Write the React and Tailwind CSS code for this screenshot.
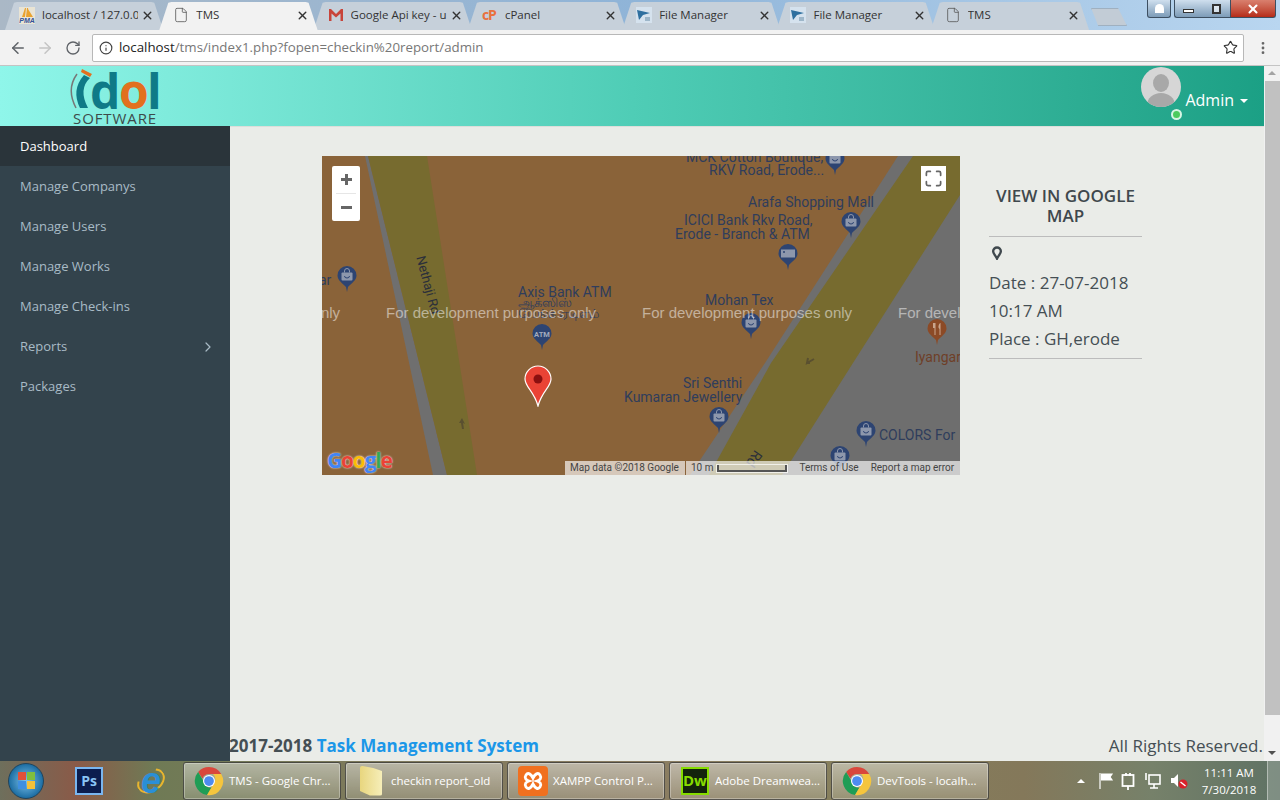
import React from "react";
import { ArrowLeft, ArrowRight, ChevronRight, File, Info, Maximize, MoreVertical, RotateCw, Star, X } from "lucide-react";

const tabs = [
  { title: "localhost / 127.0.0", icon: "pma" },
  { title: "TMS", icon: "doc", active: true },
  { title: "Google Api key - u", icon: "gmail" },
  { title: "cPanel", icon: "cpanel" },
  { title: "File Manager", icon: "fm" },
  { title: "File Manager", icon: "fm" },
  { title: "TMS", icon: "doc" },
];

const menu = ["Dashboard", "Manage Companys", "Manage Users", "Manage Works", "Manage Check-ins", "Reports", "Packages"];

const pins = [
  { cls: "left-[15px] top-[110px]", kind: "bag" },
  { cls: "left-[210px] top-[168px]", kind: "atm" },
  { cls: "left-[503px] top-[-7px]", kind: "bag" },
  { cls: "left-[519px] top-[56px]", kind: "bag" },
  { cls: "left-[456px] top-[88px]", kind: "bank" },
  { cls: "left-[419px] top-[157px]", kind: "bag" },
  { cls: "left-[387px] top-[251px]", kind: "bag" },
  { cls: "left-[534px] top-[265px]", kind: "bag" },
  { cls: "left-[508px] top-[290px]", kind: "bag" },
  { cls: "left-[605px] top-[163px]", kind: "food" },
];

const labels = [
  { text: "MCK Cotton Boutique,", cls: "left-[364px] top-[-6px]" },
  { text: "RKV Road, Erode...", cls: "left-[387px] top-[7px]" },
  { text: "Arafa Shopping Mall", cls: "left-[426px] top-[39px]" },
  { text: "ICICI Bank Rkv Road,", cls: "left-[362px] top-[57px]" },
  { text: "Erode - Branch & ATM", cls: "left-[353px] top-[71px]" },
  { text: "Axis Bank ATM", cls: "left-[196px] top-[129px]" },
  { text: "Mohan Tex", cls: "left-[383px] top-[137px]" },
  { text: "Sri Senthi", cls: "left-[361px] top-[220px]" },
  { text: "Kumaran Jewellery", cls: "left-[302px] top-[234px]" },
  { text: "COLORS For", cls: "left-[557px] top-[272px]" },
  { text: "ar", cls: "left-[-3px] top-[117px]" },
];

const watermarks = ["left-[-192px]", "left-[64px]", "left-[320px]", "left-[576px]"];

function ChromeIcon({ size = 30 }) {
  return (
    <svg width={size} height={size} viewBox="0 0 32 32" className="shrink-0">
      <path d="M16 1a15 15 0 0 1 13 7.5H16a7.5 7.5 0 0 0-7 4.8L4.4 6.4A15 15 0 0 1 16 1z" fill="#d9473c" />
      <path d="M4.4 6.4 11 17.5a7.5 7.5 0 0 0 7.6 5.6l-4.7 7.8A15 15 0 0 1 4.4 6.4z" fill="#1f9d55" />
      <path d="M29 8.5a15 15 0 0 1-15.1 22.4l6.7-11.5a7.5 7.5 0 0 0-.3-10.9z" fill="#f5c53d" />
      <circle cx="16" cy="16" r="6.4" fill="#fff" />
      <circle cx="16" cy="16" r="5.2" fill="#4d8bf0" />
    </svg>
  );
}

function FmIcon() {
  return (
    <svg width="16" height="16" viewBox="0 0 16 16" className="shrink-0">
      <rect width="16" height="16" fill="#d5e2ee" />
      <path d="M1 3 L14 6 L7 8 L3 13z" fill="#2e6f9f" />
      <path d="M9 10h5v4H9z" fill="#9db6c9" />
    </svg>
  );
}

function TabIcon({ kind }) {
  if (kind === "doc") return <File size={16} strokeWidth={1.2} className="shrink-0 text-[#555]" />;
  if (kind === "fm") return <FmIcon />;
  if (kind === "gmail")
    return (
      <svg width="16" height="14" viewBox="0 0 16 14" className="shrink-0">
        <path d="M1 13V1h2l5 5 5-5h2v12h-2.5V5.5L8 9.5 3.500 5.500V13z" fill="#c8443a" />
      </svg>
    );
  if (kind === "cpanel") return <span className="w-[16px] shrink-0 font-['Open_Sans',sans-serif] text-[14px] leading-none font-bold tracking-[-1px] text-[#e8713c]">cP</span>;
  return (
    <span className="flex w-[16px] shrink-0 flex-col items-center bg-[#e9e4d4]">
      <svg width="16" height="10" viewBox="0 0 16 10">
        <path d="M3 10 6 1h1L6 10zM7 10l1-9h1l1 9zM10 10 9 2l5 8z" fill="#e9a22f" />
      </svg>
      <span className="font-['Liberation_Sans',sans-serif] text-[7px] leading-[7px] font-bold text-[#33539a] italic">PMA</span>
    </span>
  );
}

function Tab({ tab }) {
  return (
    <div
      className={
        "relative mr-[-4px] flex h-[28px] w-[158.3px] items-center pr-[9px] pb-[2px] pl-[14px] [clip-path:polygon(0_100%,9px_3%,12px_0,calc(100%-12px)_0,calc(100%-9px)_3%,100%_100%)] " +
        (tab.active ? "z-10 bg-[#f2f2f2]" : "bg-[#c6d0da]")
      }
    >
      <TabIcon kind={tab.icon} />
      <span className="ml-[7px] flex-1 overflow-hidden font-['Open_Sans',sans-serif] text-[11.5px] whitespace-nowrap text-[#333]">{tab.title}</span>
      <X size={13} strokeWidth={2.6} className="ml-[3px] shrink-0 text-[#333]" />
    </div>
  );
}

function TabStrip() {
  return (
    <div className="flex h-[30px] items-end bg-gradient-to-r from-[#aab8c6] via-[#8fb4d8] to-[#b9d6f0] pl-[5px]">
      {tabs.map((t, i) => (
        <Tab key={i} tab={t} />
      ))}
      <div className="mb-[4px] ml-[6px] h-[18px] w-[36px] border border-[#9fb0c0] bg-[#c2ccd6] [clip-path:polygon(0_0,75%_0,100%_100%,20%_100%)]" />
      <div className="mb-auto ml-auto flex h-[18px] items-stretch pr-[4px]">
        <div className="mr-[3px] flex w-[24px] items-center justify-center rounded-b-[3px] border border-t-0 border-[#3d4f61] bg-gradient-to-b from-[#cfdfee] to-[#7d9cb8]">
          <span className="h-[9px] w-[9px] rounded-t-full bg-white" />
        </div>
        <div className="flex w-[28px] items-center justify-center rounded-bl-[3px] border border-t-0 border-r-0 border-[#3d4f61] bg-gradient-to-b from-[#cfdfee] to-[#7d9cb8]">
          <span className="mt-[4px] h-[4px] w-[11px] border border-[#333] bg-white" />
        </div>
        <div className="flex w-[28px] items-center justify-center border-b border-[#3d4f61] bg-gradient-to-b from-[#cfdfee] to-[#7d9cb8]">
          <span className="h-[10px] w-[9px] border-2 border-[#333] bg-white/60" />
        </div>
        <div className="flex w-[46px] items-center justify-center rounded-br-[3px] border border-t-0 border-[#3d4f61] bg-gradient-to-b from-[#d9806e] to-[#b52a17]">
          <X size={14} strokeWidth={3.5} className="text-white" />
        </div>
      </div>
    </div>
  );
}

function Toolbar() {
  return (
    <div className="flex h-[36px] items-center border-b border-[#c4c4c4] bg-[#f2f2f2] pl-[9px]">
      <ArrowLeft size={18} strokeWidth={2} className="text-[#5f6368]" />
      <ArrowRight size={18} strokeWidth={2} className="ml-[9px] text-[#c4c4c4]" />
      <RotateCw size={16} strokeWidth={2} className="ml-[11px] text-[#5f6368]" />
      <div className="ml-[11px] flex h-[28px] w-[1152px] items-center rounded-[2px] border border-[#b8b8b8] bg-white pr-[5px] pl-[6px]">
        <Info size={14} className="text-[#444]" />
        <span className="ml-[6px] flex-1 font-['Open_Sans',sans-serif] text-[13.3px] text-[#777]">
          <span className="text-[#222]">localhost</span>/tms/index1.php?fopen=checkin%20report/admin
        </span>
        <Star size={15} strokeWidth={1.8} className="text-[#333]" />
      </div>
      <MoreVertical size={16} strokeWidth={2.2} className="ml-[11px] text-[#666]" />
    </div>
  );
}

function Logo() {
  return (
    <div className="relative ml-[69px] h-[60px] w-[96px] overflow-hidden">
      <svg width="26" height="42" viewBox="0 0 26 42" className="absolute top-[3px] left-0">
        <path d="M8 5 Q-3 20 7 39" fill="none" stroke="#777" strokeWidth="1.5" />
        <path d="M21 9 Q9 20 19 39 L11 39 Q2 21 15 6z" fill="#0f7a87" />
        <path d="M13 0 L23 5 L21 8 L12 3z" fill="#e2701f" />
      </svg>
      <div className="absolute top-[-4px] left-[21px] font-['Open_Sans',sans-serif] text-[48px] leading-[58px] font-bold tracking-[-1.5px] text-[#0f7a87]">
        d<span className="text-[#e2701f]">o</span>l
      </div>
      <div className="absolute top-[44px] left-[4px] font-['Open_Sans',sans-serif] text-[15px] leading-[16px] tracking-[0.9px] text-[#3d4a4a]">SOFTWARE</div>
    </div>
  );
}

function Header() {
  return (
    <header className="flex h-[60px] shrink-0 items-start justify-between bg-gradient-to-r from-[#8ff6ea] via-[#4fcdb6] to-[#1ba085]">
      <Logo />
      <div className="relative mr-[16px] flex items-start">
        <svg width="40" height="40" viewBox="0 0 40 40" className="mt-px">
          <defs>
            <clipPath id="avatar-clip">
              <circle cx="20" cy="20" r="20" />
            </clipPath>
          </defs>
          <circle cx="20" cy="20" r="20" fill="#d6d6d6" />
          <g clipPath="url(#avatar-clip)" fill="#a8a8a8">
            <ellipse cx="20" cy="16" rx="8" ry="9" />
            <ellipse cx="20" cy="38" rx="14" ry="12" />
          </g>
        </svg>
        <span className="mt-[23px] ml-[4px] font-['Open_Sans',sans-serif] text-[16px] leading-[22px] text-white">Admin</span>
        <span className="mt-[33px] ml-[6px] h-0 w-0 border-x-[4px] border-t-[4px] border-x-transparent border-t-white" />
        <span className="absolute top-[43px] left-[30px] h-[11px] w-[11px] rounded-full border-2 border-[#d8f5e4] bg-[#4ccb5e]" />
      </div>
    </header>
  );
}

function Sidebar() {
  return (
    <aside className="w-[230px] shrink-0 bg-[#33434c] font-['Open_Sans',sans-serif] text-[13px]">
      {menu.map((m, i) => (
        <div key={m} className={"flex h-[40px] items-center justify-between pt-[2px] pr-[14px] pl-[20px] " + (i === 0 ? "bg-[#2a343a] text-white" : "text-[#a9bbc6]")}>
          {m}
          {m === "Reports" && <ChevronRight size={16} strokeWidth={1.8} />}
        </div>
      ))}
    </aside>
  );
}

function MapPin({ kind, cls }) {
  const fill = kind === "food" ? "#8c4a26" : "#2d4472";
  return (
    <svg width="20" height="26" viewBox="0 0 20 26" className={"absolute " + cls}>
      <path d="M10 0a9.500 9.500 0 0 1 9.500 9.500c0 5-5.500 8-8.500 11.500l-1 5-1-5C6 17.500.5 14.500.5 9.500A9.500 9.500 0 0 1 10 0z" fill={fill} />
      {kind === "bag" && (
        <g>
          <rect x="4.500" y="6.500" width="11" height="8" rx="1" fill="#8d97ac" />
          <path d="M7.500 6.500V5a2.500 2.500 0 0 1 5 0v1.500" fill="none" stroke="#8d97ac" strokeWidth="1" />
          <path d="M7.500 10a2.500 2 0 0 0 5 0" fill="none" stroke={fill} strokeWidth="1" />
        </g>
      )}
      {kind === "atm" && (
        <text x="10" y="13" textAnchor="middle" fontFamily="Roboto, sans-serif" fontSize="7.500" fontWeight="700" fill="#a2abbd">
          ATM
        </text>
      )}
      {kind === "bank" && (
        <g>
          <rect x="3" y="5.500" width="14" height="8" fill="#8d97ac" />
          <circle cx="6" cy="8" r="1" fill={fill} />
        </g>
      )}
      {kind === "food" && <path d="M6 4v5h1.500v7h1V4M13 4c-2 2-2 5-.5 6v6h1V4z" fill="#c9a58d" />}
    </svg>
  );
}

function GoogleMap() {
  return (
    <div className="relative h-[319px] w-[638px] shrink-0 overflow-hidden bg-[#8a6339] font-['Roboto',sans-serif] text-[14px] leading-[14px]">
      <svg width="638" height="319" viewBox="0 0 638 319" className="absolute inset-0">
        <polygon points="43,0 46,0 125,319 111,319" fill="#6f6f6f" />
        <polygon points="46,0 105,0 155,319 125,319" fill="#776b2f" />
        <polygon points="576,0 638,0 638,319 368,319 443,207" fill="#6e6e6e" />
        <polygon points="591,0 638,0 638,39 531,207 460,319 387,319 449,207" fill="#776b2f" />
        <path d="M143 268l-3-6-3 5 2 0 1 6 2 0-1-6z" fill="#5a5030" />
        <path d="M492 203l-7 4 1-5m-1 5 3 0" fill="none" stroke="#5a5030" strokeWidth="2" />
      </svg>

      <span className="absolute top-[122px] left-[76px] rotate-[75deg] text-[13px] whitespace-nowrap text-[#2b2f3a]">Nethaji Rd</span>
      <span className="absolute top-[296px] left-[424px] rotate-[125deg] text-[14px] text-[#2b2f3a]">Rd</span>

      {pins.map((p, i) => (
        <MapPin key={i} kind={p.kind} cls={p.cls} />
      ))}
      {labels.map((l) => (
        <span key={l.text} className={"absolute whitespace-nowrap text-[#2f3d5c] " + l.cls}>
          {l.text}
        </span>
      ))}
      <span className="absolute top-[194px] left-[593px] text-[#6e3f28]">Iyangar</span>
      <span className="absolute top-[141px] left-[196px] text-[13px] leading-[11px] whitespace-nowrap text-[#2f3d5c]">
        ஆக்ஸிஸ்
        <br />
        பேங்க் ஏடிஎம்
      </span>

      <svg width="28" height="42" viewBox="0 0 28 42" className="absolute top-[209px] left-[202px]">
        <path d="M14 1a13 13 0 0 1 13 13c0 8-9 12-13 27C10 26 1 22 1 14A13 13 0 0 1 14 1z" fill="#ea4335" stroke="#fff" strokeWidth="1.200" />
        <circle cx="14" cy="14" r="4.500" fill="#8b1010" />
      </svg>

      {watermarks.map((w) => (
        <span key={w} className={"absolute top-[150px] font-['Liberation_Sans',sans-serif] text-[15px] whitespace-nowrap text-white/50 " + w}>
          For development purposes only
        </span>
      ))}

      <div className="absolute top-[10px] left-[10px] w-[28px] rounded-[2px] bg-white">
        <div className="flex h-[27px] items-center justify-center">
          <span className="relative block h-[11px] w-[11px] bg-[linear-gradient(#666,#666)] bg-[length:11px_3px] bg-center bg-no-repeat">
            <span className="absolute top-0 left-[4px] h-[11px] w-[3px] bg-[#666]" />
          </span>
        </div>
        <div className="mx-[4px] h-px bg-[#e6e6e6]" />
        <div className="flex h-[27px] items-center justify-center">
          <span className="h-[3px] w-[11px] bg-[#666]" />
        </div>
      </div>
      <div className="absolute top-[10px] left-[599px] flex h-[25px] w-[25px] items-center justify-center bg-white">
        <Maximize size={19} strokeWidth={2.2} className="text-[#666]" />
      </div>

      <div className="absolute bottom-[3px] left-[5px] font-['Open_Sans',sans-serif] text-[21px] leading-[24px] font-bold tracking-[-1.200px] [text-shadow:0_0_2px_#fff]">
        <span className="text-[#4285f4]">G</span>
        <span className="text-[#ea4335]">o</span>
        <span className="text-[#fbbc05]">o</span>
        <span className="text-[#4285f4]">g</span>
        <span className="text-[#34a853]">l</span>
        <span className="text-[#ea4335]">e</span>
      </div>

      <div className="absolute right-0 bottom-0 flex h-[14px] w-[395px] items-center bg-white/65 font-['Roboto',sans-serif] text-[10px] leading-[14px] text-[#444]">
        <span className="pl-[5px]">Map data ©2018 Google</span>
        <span className="ml-[6px] h-[14px] w-px bg-[#8a6339]" />
        <span className="ml-[5px]">10 m</span>
        <span className="ml-[4px] h-[7px] w-[70px] border-x-2 border-b-2 border-[#555] outline outline-white/70" />
        <span className="ml-[12px]">Terms of Use</span>
        <span className="ml-[12px]">Report a map error</span>
      </div>
    </div>
  );
}

function InfoPanel() {
  return (
    <div className="ml-[29px] w-[153px] font-['Open_Sans',sans-serif] text-[#454f54]">
      <h3 className="mt-[30px] border-b border-[#bcbcbc] pb-[10px] text-center text-[17px] leading-[20px] font-semibold whitespace-pre-line text-[#3f484d]">{"VIEW IN GOOGLE\nMAP"}</h3>
      <div className="mt-[9px] border-b border-[#bcbcbc] pb-[5px] text-[17px] leading-[28px]">
        <svg width="12" height="14" viewBox="0 0 14 16" className="my-[3px] ml-[2px]">
          <path d="M7 1.500a4.500 4.500 0 0 1 4.500 4.500c0 3-3 5-4.500 8.500C5.500 11 2.500 9 2.500 6A4.500 4.500 0 0 1 7 1.500z" fill="none" stroke="#3f484d" strokeWidth="2.800" />
        </svg>
        <div className="mt-[9px]">Date : 27-07-2018</div>
        <div>10:17 AM</div>
        <div>Place : GH,erode</div>
      </div>
    </div>
  );
}

function Footer() {
  return (
    <footer className="mt-auto ml-[-1px] flex h-[30px] items-center justify-between pr-[1px] font-['Open_Sans',sans-serif] text-[17px] text-[#454f54]">
      <div className="font-bold">
        2017-2018 <span className="text-[#1b97e8]">Task Management System</span>
      </div>
      <div>All Rights Reserved.</div>
    </footer>
  );
}

function Scrollbar() {
  return (
    <div className="flex w-[16px] shrink-0 flex-col items-center bg-[#f1f1f1]">
      <span className="mt-[5px] mb-[6px] h-0 w-0 border-x-[4px] border-b-[4px] border-x-transparent border-b-[#a3a3a3]" />
      <div className="h-[634px] w-[15px] bg-[#c1c1c1]" />
      <span className="mt-auto mb-[6px] h-0 w-0 border-x-[4px] border-t-[4px] border-x-transparent border-t-[#505050]" />
    </div>
  );
}

function TaskButton({ icon, label }) {
  return (
    <div className="flex h-[38px] w-[158px] items-center rounded-[3px] border border-[#2c2c2c]/70 bg-gradient-to-b from-white/45 to-white/15 pl-[9px] font-['Open_Sans',sans-serif] text-[11.5px] whitespace-nowrap text-white shadow-[inset_0_0_0_1px_rgba(255,255,255,0.3)]">
      <span className="flex w-[32px] shrink-0 justify-center">{icon}</span>
      <span className="ml-[4px]">{label}</span>
    </div>
  );
}

function Taskbar() {
  return (
    <div className="flex h-[39px] shrink-0 items-center bg-[linear-gradient(90deg,#6e6f5c_0%,#8a5a48_6%,#6f7a55_12%,#7f7a5c_30%,#8b7d62_50%,#86805c_68%,#84785a_80%,#76816a_90%,#5f7264_100%)]">
      <div className="ml-[8px] flex h-[36px] w-[36px] items-center justify-center rounded-full border border-[#20445c] bg-[radial-gradient(circle,#7ec3ec,#1d6ea3_70%)]">
        <span className="grid grid-cols-2 gap-px">
          <span className="h-[8px] w-[8px] bg-[#e2513a]" />
          <span className="h-[8px] w-[8px] bg-[#7fbf3f]" />
          <span className="h-[8px] w-[8px] bg-[#3f8fe0]" />
          <span className="h-[8px] w-[8px] bg-[#f3c13a]" />
        </span>
      </div>
      <div className="ml-[31px] flex h-[28px] w-[28px] items-center justify-center border-2 border-[#7ab6f0] bg-[#0c1d4e] font-['Open_Sans',sans-serif] text-[14px] font-bold text-[#8ac4f5]">Ps</div>
      <div className="relative ml-[33px] flex h-[30px] w-[30px] items-center justify-center font-['Liberation_Sans',sans-serif] text-[36px] leading-[30px] font-bold text-[#2b8fd6] italic">
        <span className="absolute top-[4px] left-0 h-[22px] w-[30px] -rotate-[35deg] rounded-[50%] border-2 border-t-transparent border-r-[#e8b52e] border-b-[#e8b52e] border-l-[#e8b52e]" />
        <span className="relative">e</span>
      </div>
      <div className="ml-[17px] flex gap-[4px]">
        <TaskButton icon={<ChromeIcon />} label="TMS - Google Chr..." />
        <TaskButton
          icon={
            <span className="h-[30px] w-[22px] rounded-[2px] bg-gradient-to-r from-[#e8d67e] to-[#f6eeb8] [clip-path:polygon(0_0,60%_8%,100%_18%,100%_100%,45%_100%,0_85%)]" />
          }
          label="checkin report_old"
        />
        <TaskButton
          icon={
            <svg width="30" height="30" viewBox="0 0 30 30">
              <rect width="30" height="30" rx="4" fill="#f0701f" />
              <path d="M8 9c2-3 5-1 7 3 2-4 5-6 7-3s0 5-3 6c3 1 5 3 3 6s-5 1-7-3c-2 4-5 6-7 3s0-5 3-6c-3-1-5-3-3-6z" fill="none" stroke="#fff" strokeWidth="2.800" />
            </svg>
          }
          label="XAMPP Control P..."
        />
        <TaskButton
          icon={
            <span className="flex h-[28px] w-[28px] items-center justify-center border-2 border-[#86dc00] bg-[#13240c] font-['Open_Sans',sans-serif] text-[15px] font-bold text-[#86dc00]">Dw</span>
          }
          label="Adobe Dreamwea..."
        />
        <TaskButton icon={<ChromeIcon />} label="DevTools - localh..." />
      </div>
      <div className="ml-[88px] flex items-center text-white">
        <span className="h-0 w-0 border-x-[4px] border-b-[4px] border-x-transparent border-b-white" />
        <svg width="16" height="18" viewBox="0 0 16 18" className="ml-[13px]">
          <path d="M2 1v16M3 2h11l-2 3 2 3H3" fill="#fff" stroke="#fff" strokeWidth="1.200" />
        </svg>
        <svg width="14" height="18" viewBox="0 0 14 18" className="ml-[7px]">
          <rect x="1.500" y="3" width="11" height="11" fill="none" stroke="#fff" strokeWidth="1.800" />
          <path d="M5 1v3M9 1v3M7 14v4" stroke="#fff" strokeWidth="1.800" />
        </svg>
        <svg width="16" height="18" viewBox="0 0 16 18" className="ml-[10px]">
          <rect x="4" y="3" width="11" height="9" fill="none" stroke="#fff" strokeWidth="1.600" />
          <path d="M1 1v7M9 12v4M5 16h8" stroke="#fff" strokeWidth="1.600" />
        </svg>
        <svg width="18" height="18" viewBox="0 0 18 18" className="ml-[9px]">
          <path d="M1 6h3l4-4v13l-4-4H1z" fill="#fff" />
          <circle cx="13" cy="12" r="4.500" fill="#d8202a" />
          <path d="M10.500 10l5 4" stroke="#fff" strokeWidth="1.500" />
        </svg>
        <div className="ml-[9px] w-[64px] text-center font-['Open_Sans',sans-serif] text-[11.5px] leading-[17px] whitespace-nowrap">
          11:11 AM
          <br />
          7/30/2018
        </div>
      </div>
      <div className="mr-0 ml-auto h-[39px] w-[13px] border-l border-white/40 bg-white/20" />
    </div>
  );
}

export default function App() {
  return (
    <div className="flex h-screen flex-col overflow-hidden bg-[#eaece8]">
      <TabStrip />
      <Toolbar />
      <div className="flex min-h-0 flex-1">
        <div className="flex min-w-0 flex-1 flex-col">
          <Header />
          <div className="flex min-h-0 flex-1">
            <Sidebar />
            <main className="flex flex-1 flex-col border-t border-[#dcdeda] bg-[#eaece8]">
              <div className="flex pt-[29px] pl-[92px]">
                <GoogleMap />
                <InfoPanel />
              </div>
              <Footer />
            </main>
          </div>
        </div>
        <Scrollbar />
      </div>
      <Taskbar />
    </div>
  );
}
